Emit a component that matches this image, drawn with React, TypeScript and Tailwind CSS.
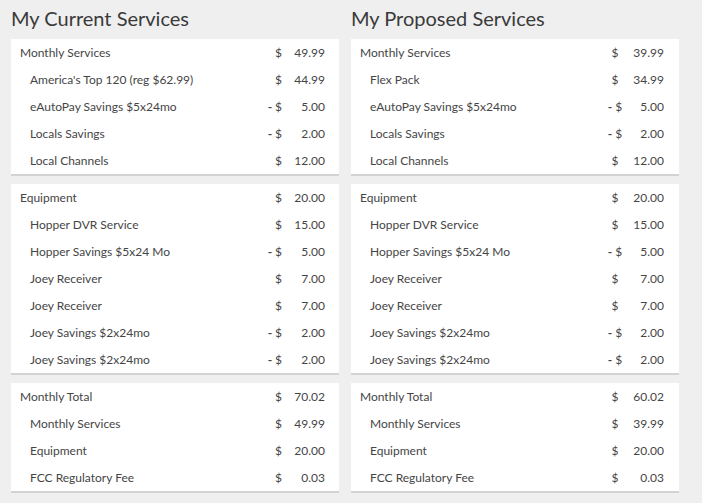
type Row = { label: string; amount: string; minus?: boolean; sub?: boolean };

const current: Row[][] = [
  [
    { label: "Monthly Services", amount: "49.99" },
    { label: "America's Top 120 (reg $62.99)", amount: "44.99", sub: true },
    { label: "eAutoPay Savings $5x24mo", amount: "5.00", minus: true, sub: true },
    { label: "Locals Savings", amount: "2.00", minus: true, sub: true },
    { label: "Local Channels", amount: "12.00", sub: true },
  ],
  [
    { label: "Equipment", amount: "20.00" },
    { label: "Hopper DVR Service", amount: "15.00", sub: true },
    { label: "Hopper Savings $5x24 Mo", amount: "5.00", minus: true, sub: true },
    { label: "Joey Receiver", amount: "7.00", sub: true },
    { label: "Joey Receiver", amount: "7.00", sub: true },
    { label: "Joey Savings $2x24mo", amount: "2.00", minus: true, sub: true },
    { label: "Joey Savings $2x24mo", amount: "2.00", minus: true, sub: true },
  ],
  [
    { label: "Monthly Total", amount: "70.02" },
    { label: "Monthly Services", amount: "49.99", sub: true },
    { label: "Equipment", amount: "20.00", sub: true },
    { label: "FCC Regulatory Fee", amount: "0.03", sub: true },
  ],
];

const proposed: Row[][] = [
  [
    { label: "Monthly Services", amount: "39.99" },
    { label: "Flex Pack", amount: "34.99", sub: true },
    { label: "eAutoPay Savings $5x24mo", amount: "5.00", minus: true, sub: true },
    { label: "Locals Savings", amount: "2.00", minus: true, sub: true },
    { label: "Local Channels", amount: "12.00", sub: true },
  ],
  [
    { label: "Equipment", amount: "20.00" },
    { label: "Hopper DVR Service", amount: "15.00", sub: true },
    { label: "Hopper Savings $5x24 Mo", amount: "5.00", minus: true, sub: true },
    { label: "Joey Receiver", amount: "7.00", sub: true },
    { label: "Joey Receiver", amount: "7.00", sub: true },
    { label: "Joey Savings $2x24mo", amount: "2.00", minus: true, sub: true },
    { label: "Joey Savings $2x24mo", amount: "2.00", minus: true, sub: true },
  ],
  [
    { label: "Monthly Total", amount: "60.02" },
    { label: "Monthly Services", amount: "39.99", sub: true },
    { label: "Equipment", amount: "20.00", sub: true },
    { label: "FCC Regulatory Fee", amount: "0.03", sub: true },
  ],
];

const Column = ({ title, groups, centered }: { title: string; groups: Row[][]; centered?: boolean }) => {
  return (
    <div className="w-[328px]">
      <h2 className="text-[20px] leading-[24px] text-[#3a3a3a] pt-[6px] pb-[9px]">{title}</h2>
      <div className="flex flex-col gap-[8px]">
        {groups.map((group, i) => (
          <div key={i} className="bg-white border-b-2 border-[#d3d3d3]">
            {group.map((row, j) => (
              <div key={j} className="flex items-center h-[27px] pt-px text-[12px] text-[#454545]">
                <span className={row.sub ? "flex-1 pl-[19px]" : "flex-1 pl-[9px]"}>{row.label}</span>
                {centered ? (
                  <span className="w-[24px] text-center">
                    {row.minus && <b className="font-bold">- </b>}$
                  </span>
                ) : (
                  <span className="w-[30px] text-right">
                    {row.minus && <b className="font-bold">- </b>}$
                  </span>
                )}
                <span className={centered ? "w-[37px] text-right mr-[15px]" : "w-[43px] text-right mr-[14px]"}>
                  {row.amount}
                </span>
              </div>
            ))}
          </div>
        ))}
      </div>
    </div>
  );
};

export default function App() {
  return (
    <div className="min-h-[503px] bg-[#efefef] pl-[11px] flex gap-[12px] font-['Lato',sans-serif]">
      <Column title="My Current Services" groups={current} />
      <Column title="My Proposed Services" groups={proposed} centered />
    </div>
  );
}
